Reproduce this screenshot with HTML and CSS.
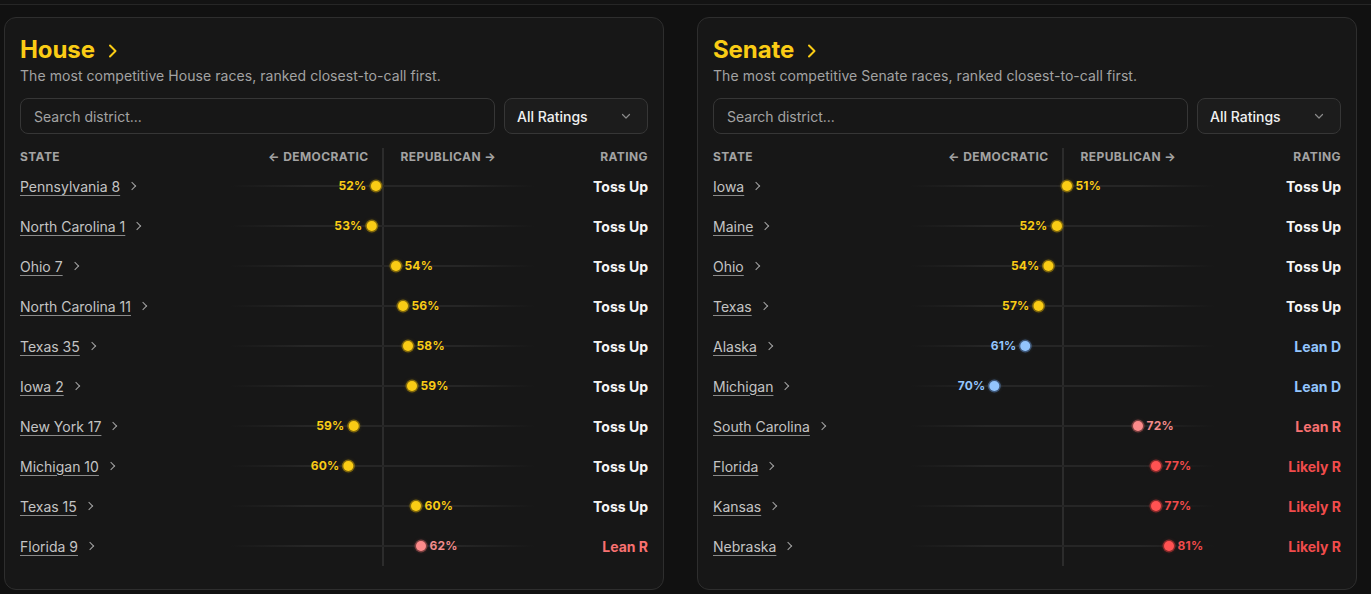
FILE: index.html
```html
<!DOCTYPE html>
<html lang="en">
<head>
<meta charset="utf-8">
<title>Competitive Races</title>
<link rel="stylesheet" href="styles.css">
</head>
<body>
<div class="topbar"></div>
<main class="boards">
  <section class="card card--house">
    <header class="card-head">
      <h2 class="title">House <svg class="title-chev" viewBox="0 0 12 16" width="12" height="16"><path d="M3 2.5 L8.5 8 L3 13.5" fill="none" stroke="currentColor" stroke-width="2" stroke-linecap="round" stroke-linejoin="round"/></svg></h2>
      <p class="sub">The most competitive House races, ranked closest-to-call first.</p>
    </header>
    <div class="filters">
      <div class="search">Search district...</div>
      <div class="select"><span>All Ratings</span><svg viewBox="0 0 12 12" width="12" height="12"><path d="M2.5 4.5 L6 8 L9.5 4.5" fill="none" stroke="currentColor" stroke-width="1.2" stroke-linecap="round" stroke-linejoin="round"/></svg></div>
    </div>
    <div class="table">
      <div class="thead">
        <span class="th">State</span>
        <span class="th axis"><span class="dem">← Democratic</span><span class="rep">Republican →</span></span>
        <span class="th th-r">Rating</span>
      </div>
      <div class="row"><a class="state">Pennsylvania 8</a><div class="chart"><div class="marker left toss" style="left: calc(50% - 7px)"><i class="dot"></i><b class="pct">52%</b></div></div><span class="rating toss">Toss Up</span></div>
      <div class="row"><a class="state">North Carolina 1</a><div class="chart"><div class="marker left toss" style="left: calc(50% - 11px)"><i class="dot"></i><b class="pct">53%</b></div></div><span class="rating toss">Toss Up</span></div>
      <div class="row"><a class="state">Ohio 7</a><div class="chart"><div class="marker right toss" style="left: calc(50% + 13px)"><i class="dot"></i><b class="pct">54%</b></div></div><span class="rating toss">Toss Up</span></div>
      <div class="row"><a class="state">North Carolina 11</a><div class="chart"><div class="marker right toss" style="left: calc(50% + 20px)"><i class="dot"></i><b class="pct">56%</b></div></div><span class="rating toss">Toss Up</span></div>
      <div class="row"><a class="state">Texas 35</a><div class="chart"><div class="marker right toss" style="left: calc(50% + 25px)"><i class="dot"></i><b class="pct">58%</b></div></div><span class="rating toss">Toss Up</span></div>
      <div class="row"><a class="state">Iowa 2</a><div class="chart"><div class="marker right toss" style="left: calc(50% + 29px)"><i class="dot"></i><b class="pct">59%</b></div></div><span class="rating toss">Toss Up</span></div>
      <div class="row"><a class="state">New York 17</a><div class="chart"><div class="marker left toss" style="left: calc(50% - 29px)"><i class="dot"></i><b class="pct">59%</b></div></div><span class="rating toss">Toss Up</span></div>
      <div class="row"><a class="state">Michigan 10</a><div class="chart"><div class="marker left toss" style="left: calc(50% - 34px)"><i class="dot"></i><b class="pct">60%</b></div></div><span class="rating toss">Toss Up</span></div>
      <div class="row"><a class="state">Texas 15</a><div class="chart"><div class="marker right toss" style="left: calc(50% + 33px)"><i class="dot"></i><b class="pct">60%</b></div></div><span class="rating toss">Toss Up</span></div>
      <div class="row"><a class="state">Florida 9</a><div class="chart"><div class="marker right leanr" style="left: calc(50% + 38px)"><i class="dot"></i><b class="pct">62%</b></div></div><span class="rating leanr">Lean R</span></div>
    </div>
  </section>

  <section class="card card--senate">
    <header class="card-head">
      <h2 class="title">Senate <svg class="title-chev" viewBox="0 0 12 16" width="12" height="16"><path d="M3 2.5 L8.5 8 L3 13.5" fill="none" stroke="currentColor" stroke-width="2" stroke-linecap="round" stroke-linejoin="round"/></svg></h2>
      <p class="sub">The most competitive Senate races, ranked closest-to-call first.</p>
    </header>
    <div class="filters">
      <div class="search">Search district...</div>
      <div class="select"><span>All Ratings</span><svg viewBox="0 0 12 12" width="12" height="12"><path d="M2.5 4.5 L6 8 L9.5 4.5" fill="none" stroke="currentColor" stroke-width="1.2" stroke-linecap="round" stroke-linejoin="round"/></svg></div>
    </div>
    <div class="table">
      <div class="thead">
        <span class="th">State</span>
        <span class="th axis"><span class="dem">← Democratic</span><span class="rep">Republican →</span></span>
        <span class="th th-r">Rating</span>
      </div>
      <div class="row"><a class="state">Iowa</a><div class="chart"><div class="marker right toss" style="left: calc(50% + 4px)"><i class="dot"></i><b class="pct">51%</b></div></div><span class="rating toss">Toss Up</span></div>
      <div class="row"><a class="state">Maine</a><div class="chart"><div class="marker left toss" style="left: calc(50% - 6px)"><i class="dot"></i><b class="pct">52%</b></div></div><span class="rating toss">Toss Up</span></div>
      <div class="row"><a class="state">Ohio</a><div class="chart"><div class="marker left toss" style="left: calc(50% - 14px)"><i class="dot"></i><b class="pct">54%</b></div></div><span class="rating toss">Toss Up</span></div>
      <div class="row"><a class="state">Texas</a><div class="chart"><div class="marker left toss" style="left: calc(50% - 24px)"><i class="dot"></i><b class="pct">57%</b></div></div><span class="rating toss">Toss Up</span></div>
      <div class="row"><a class="state">Alaska</a><div class="chart"><div class="marker left leand" style="left: calc(50% - 37px)"><i class="dot"></i><b class="pct">61%</b></div></div><span class="rating leand">Lean D</span></div>
      <div class="row"><a class="state">Michigan</a><div class="chart"><div class="marker left leand" style="left: calc(50% - 68px)"><i class="dot"></i><b class="pct">70%</b></div></div><span class="rating leand">Lean D</span></div>
      <div class="row"><a class="state">South Carolina</a><div class="chart"><div class="marker right leanr" style="left: calc(50% + 75px)"><i class="dot"></i><b class="pct">72%</b></div></div><span class="rating leanr">Lean R</span></div>
      <div class="row"><a class="state">Florida</a><div class="chart"><div class="marker right likelyr" style="left: calc(50% + 93px)"><i class="dot"></i><b class="pct">77%</b></div></div><span class="rating likelyr">Likely R</span></div>
      <div class="row"><a class="state">Kansas</a><div class="chart"><div class="marker right likelyr" style="left: calc(50% + 93px)"><i class="dot"></i><b class="pct">77%</b></div></div><span class="rating likelyr">Likely R</span></div>
      <div class="row"><a class="state">Nebraska</a><div class="chart"><div class="marker right likelyr" style="left: calc(50% + 106px)"><i class="dot"></i><b class="pct">81%</b></div></div><span class="rating likelyr">Likely R</span></div>
    </div>
  </section>
</main>
</body>
</html>
```

FILE: styles.css
```css
* { box-sizing: border-box; }

html, body {
  margin: 0;
  padding: 0;
  background: #111111;
  font-family: Inter, "Noto Sans", "Liberation Sans", sans-serif;
  color: #e5e5e5;
}

body { height: 594px; overflow: hidden; }

.topbar {
  height: 5px;
  background: #131313;
  border-bottom: 1px solid #262626;
}

.boards {
  display: grid;
  grid-template-columns: 660px 660px;
  column-gap: 33px;
  padding: 12px 0 0 4px;
}

.card {
  height: 573px;
  background: #171717;
  border: 1px solid #2e2e2e;
  border-radius: 12px;
  padding: 16px 15px 23px 15px;
}

.card-head { margin: 0; }

.title {
  margin: 0;
  display: flex;
  align-items: center;
  gap: 12px;
  font-size: 24px;
  line-height: 32px;
  font-weight: 700;
  color: #facc15;
  letter-spacing: -0.1px;
}

.title-chev { color: #facc15; margin-top: 1px; }

.sub {
  margin: 0;
  font-size: 14px;
  line-height: 20px;
  color: #a3a3a3;
  letter-spacing: 0.06px;
}

.filters {
  display: flex;
  gap: 9px;
  margin-top: 12px;
  height: 36px;
}

.search {
  flex: 1;
  display: flex;
  align-items: center;
  padding-left: 13px;
  border: 1px solid #363636;
  border-radius: 8px;
  background: #171717;
  font-size: 14px;
  color: #a3a3a3;
}

.select {
  width: 144px;
  display: flex;
  align-items: center;
  justify-content: space-between;
  padding: 0 15px 0 12px;
  border: 1px solid #363636;
  border-radius: 8px;
  background: #1c1c1c;
  font-size: 14px;
  font-weight: 500;
  color: #f0f0f0;
}

.select svg { color: #8a8a8a; }

.table { margin-top: 14px; }

.thead, .row {
  display: grid;
  align-items: center;
}

.card--house .thead, .card--house .row { grid-template-columns: 210px 305px 1fr; }
.card--senate .thead, .card--senate .row { grid-template-columns: 197px 305px 1fr; }

.thead { height: 18px; }

.th {
  font-size: 12px;
  font-weight: 700;
  letter-spacing: 0.4px;
  text-transform: uppercase;
  color: #a3a3a3;
  line-height: 18px;
}

.th-r { text-align: right; }

.axis {
  height: 18px;
  display: grid;
  grid-template-columns: 1fr 1fr;
  background: linear-gradient(#2c2c2c, #2c2c2c) center / 2px 100% no-repeat;
}

.axis .dem { text-align: right; padding-right: 14px; }
.axis .rep { text-align: left; padding-left: 18px; }

.row { height: 40px; }

.state {
  display: inline-flex;
  align-items: center;
  font-size: 14px;
  color: #c4c4c4;
  text-decoration: underline;
  text-decoration-color: #8a8a8a;
  text-underline-offset: 3px;
  justify-self: start;
}

.state::after {
  content: "";
  width: 5px;
  height: 5px;
  border-right: 1.4px solid #a3a3a3;
  border-top: 1.4px solid #a3a3a3;
  transform: rotate(45deg);
  margin-left: 9px;
}

.chart {
  position: relative;
  height: 40px;
  background: linear-gradient(#2c2c2c, #2c2c2c) center / 2px 100% no-repeat;
}

.chart::before {
  content: "";
  position: absolute;
  left: 0;
  right: 0;
  top: 19px;
  height: 2px;
  background: linear-gradient(90deg, rgba(38,38,38,0), #262626 25%, #262626 75%, rgba(38,38,38,0));
}

.marker {
  position: absolute;
  top: 20px;
  display: flex;
  align-items: center;
  gap: 4px;
  transform: translateY(-50%);
}

.marker.right { margin-left: -5px; }
.marker.left { flex-direction: row-reverse; transform: translate(-100%, -50%); margin-left: 5px; }

.dot {
  display: block;
  width: 10px;
  height: 10px;
  border-radius: 50%;
}

.pct {
  font-size: 12px;
  font-weight: 700;
  line-height: 14px;
  letter-spacing: 0.2px;
}

.rating {
  text-align: right;
  font-size: 14px;
  font-weight: 700;
}

.marker.toss .dot { background: #facc15; box-shadow: 0 0 0 1.5px rgba(161, 128, 8, 0.7), 0 0 4px rgba(250, 204, 21, 0.35); }
.marker.toss .pct { color: #facc15; }
.rating.toss { color: #f5f5f5; }

.marker.leand .dot { background: #93c5fd; box-shadow: 0 0 0 1.5px rgba(70, 100, 140, 0.8), 0 0 4px rgba(147, 197, 253, 0.3); }
.marker.leand .pct { color: #93c5fd; }
.rating.leand { color: #93c5fd; }

.marker.leanr .dot { background: #fc8b8b; box-shadow: 0 0 0 1.5px rgba(140, 70, 70, 0.8), 0 0 4px rgba(252, 139, 139, 0.3); }
.marker.leanr .pct { color: #f28b8b; }
.rating.leanr { color: #f87171; }

.marker.likelyr .dot { background: #ff5252; box-shadow: 0 0 0 1.5px rgba(150, 45, 45, 0.85), 0 0 4px rgba(255, 82, 82, 0.35); }
.marker.likelyr .pct { color: #f04b4b; }
.rating.likelyr { color: #f04b4b; }
```
